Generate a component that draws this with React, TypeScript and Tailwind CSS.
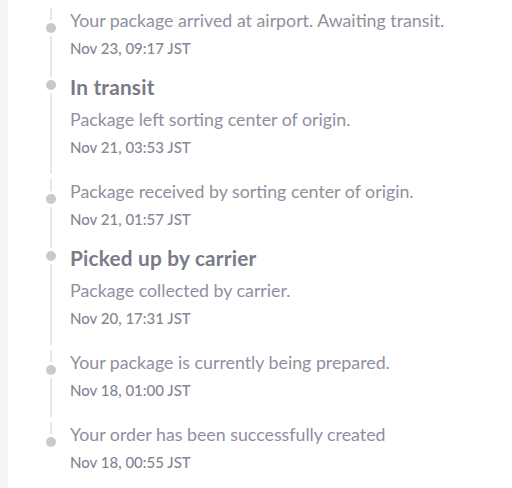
import React from "react";

type Event = {
  title?: string;
  text: string;
  time: string;
};

const events: Event[] = [
  { text: "Your package arrived at airport. Awaiting transit.", time: "Nov 23, 09:17 JST" },
  { title: "In transit", text: "Package left sorting center of origin.", time: "Nov 21, 03:53 JST" },
  { text: "Package received by sorting center of origin.", time: "Nov 21, 01:57 JST" },
  { title: "Picked up by carrier", text: "Package collected by carrier.", time: "Nov 20, 17:31 JST" },
  { text: "Your package is currently being prepared.", time: "Nov 18, 01:00 JST" },
  { text: "Your order has been successfully created", time: "Nov 18, 00:55 JST" },
];

const TimelineItem = ({ ev, last }: { ev: Event; last: boolean }) => {
  return (
    <li className="relative pl-[62px] pb-[17px]">
      {/* rail */}
      <span
        className={`absolute left-[42px] top-0 w-[2px] bg-[#e6e6e6] ${
          last ? (ev.title ? "h-[10px]" : "h-[18px]") : "bottom-0"
        }`}
      />
      {/* dot */}
      <span
        className={`absolute left-[38px] w-[10px] h-[10px] rounded-full bg-[#c9c9c9] ring-[3px] ring-white ${
          ev.title ? "top-[5px]" : "top-[15px]"
        }`}
      />
      {ev.title && (
        <h3 className="text-[20.8px] leading-[24px] font-bold tracking-[0.2px] text-[#7a7a88]">{ev.title}</h3>
      )}
      <p className={`text-[17.8px] leading-[24px] text-[#8f8f9f] ${ev.title ? "mt-[8px]" : "mt-[5px]"}`}>
        {ev.text}
      </p>
      <p className="mt-[6px] text-[15px] leading-[20px] font-medium text-[#858595]">{ev.time}</p>
    </li>
  );
};

export default function App() {
  return (
    <div
      className="min-h-screen flex bg-white"
      style={{ fontFamily: "Lato, 'Open Sans', sans-serif" }}
    >
      <div className="w-[8px] shrink-0 bg-[#f5f5f5]" />
      <ul className="flex-1 pt-[3px]">
        {events.map((ev, i) => (
          <TimelineItem key={i} ev={ev} last={i === events.length - 1} />
        ))}
      </ul>
    </div>
  );
}
